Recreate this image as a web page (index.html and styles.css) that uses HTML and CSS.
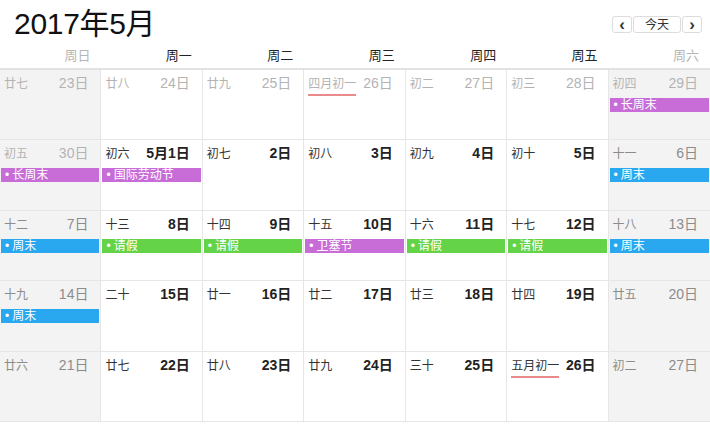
FILE: index.html
```html
<!DOCTYPE html>
<html lang="zh">
<head>
<meta charset="utf-8">
<link rel="stylesheet" href="styles.css">
</head>
<body>
<div class="cal">
  <div class="top">
    <h1 class="title">2017年5月</h1>
    <div class="nav">
      <button class="btn arrow">&lsaquo;</button>
      <button class="btn today">今天</button>
      <button class="btn arrow">&rsaquo;</button>
    </div>
  </div>
  <div class="weekdays">
    <div class="wd we">周日</div>
    <div class="wd">周一</div>
    <div class="wd">周二</div>
    <div class="wd">周三</div>
    <div class="wd">周四</div>
    <div class="wd">周五</div>
    <div class="wd we">周六</div>
  </div>
  <div class="grid">
    <!-- row 1 -->
    <div class="cell weekend other"><div class="head"><span class="lunar">廿七</span><span class="day">23日</span></div></div>
    <div class="cell other"><div class="head"><span class="lunar">廿八</span><span class="day">24日</span></div></div>
    <div class="cell other"><div class="head"><span class="lunar">廿九</span><span class="day">25日</span></div></div>
    <div class="cell other"><div class="head"><span class="lunar mark">四月初一</span><span class="day">26日</span></div></div>
    <div class="cell other"><div class="head"><span class="lunar">初二</span><span class="day">27日</span></div></div>
    <div class="cell other"><div class="head"><span class="lunar">初三</span><span class="day">28日</span></div></div>
    <div class="cell weekend other"><div class="head"><span class="lunar">初四</span><span class="day">29日</span></div><div class="ev purple">长周末</div></div>
    <!-- row 2 -->
    <div class="cell weekend other"><div class="head"><span class="lunar">初五</span><span class="day">30日</span></div><div class="ev purple">长周末</div></div>
    <div class="cell"><div class="head"><span class="lunar">初六</span><span class="day">5月1日</span></div><div class="ev purple">国际劳动节</div></div>
    <div class="cell"><div class="head"><span class="lunar">初七</span><span class="day">2日</span></div></div>
    <div class="cell"><div class="head"><span class="lunar">初八</span><span class="day">3日</span></div></div>
    <div class="cell"><div class="head"><span class="lunar">初九</span><span class="day">4日</span></div></div>
    <div class="cell"><div class="head"><span class="lunar">初十</span><span class="day">5日</span></div></div>
    <div class="cell weekend"><div class="head"><span class="lunar">十一</span><span class="day">6日</span></div><div class="ev blue">周末</div></div>
    <!-- row 3 -->
    <div class="cell weekend"><div class="head"><span class="lunar">十二</span><span class="day">7日</span></div><div class="ev blue">周末</div></div>
    <div class="cell"><div class="head"><span class="lunar">十三</span><span class="day">8日</span></div><div class="ev green">请假</div></div>
    <div class="cell"><div class="head"><span class="lunar">十四</span><span class="day">9日</span></div><div class="ev green">请假</div></div>
    <div class="cell"><div class="head"><span class="lunar">十五</span><span class="day">10日</span></div><div class="ev purple">卫塞节</div></div>
    <div class="cell"><div class="head"><span class="lunar">十六</span><span class="day">11日</span></div><div class="ev green">请假</div></div>
    <div class="cell"><div class="head"><span class="lunar">十七</span><span class="day">12日</span></div><div class="ev green">请假</div></div>
    <div class="cell weekend"><div class="head"><span class="lunar">十八</span><span class="day">13日</span></div><div class="ev blue">周末</div></div>
    <!-- row 4 -->
    <div class="cell weekend"><div class="head"><span class="lunar">十九</span><span class="day">14日</span></div><div class="ev blue">周末</div></div>
    <div class="cell"><div class="head"><span class="lunar">二十</span><span class="day">15日</span></div></div>
    <div class="cell"><div class="head"><span class="lunar">廿一</span><span class="day">16日</span></div></div>
    <div class="cell"><div class="head"><span class="lunar">廿二</span><span class="day">17日</span></div></div>
    <div class="cell"><div class="head"><span class="lunar">廿三</span><span class="day">18日</span></div></div>
    <div class="cell"><div class="head"><span class="lunar">廿四</span><span class="day">19日</span></div></div>
    <div class="cell weekend"><div class="head"><span class="lunar">廿五</span><span class="day">20日</span></div></div>
    <!-- row 5 -->
    <div class="cell weekend"><div class="head"><span class="lunar">廿六</span><span class="day">21日</span></div></div>
    <div class="cell"><div class="head"><span class="lunar">廿七</span><span class="day">22日</span></div></div>
    <div class="cell"><div class="head"><span class="lunar">廿八</span><span class="day">23日</span></div></div>
    <div class="cell"><div class="head"><span class="lunar">廿九</span><span class="day">24日</span></div></div>
    <div class="cell"><div class="head"><span class="lunar">三十</span><span class="day">25日</span></div></div>
    <div class="cell"><div class="head"><span class="lunar mark">五月初一</span><span class="day">26日</span></div></div>
    <div class="cell weekend"><div class="head"><span class="lunar">初二</span><span class="day">27日</span></div></div>
  </div>
</div>
</body>
</html>
```

FILE: styles.css
```css
* { box-sizing: border-box; }
html, body {
  margin: 0;
  padding: 0;
  background: #fff;
  overflow: hidden;
}
body {
  font-family: "Liberation Sans", "Noto Sans CJK SC", sans-serif;
  color: #222;
}
.cal {
  width: 710px;
}
.top {
  height: 43px;
  display: flex;
  justify-content: space-between;
  align-items: flex-start;
  padding: 0 8px 0 14px;
}
.title {
  margin: 0;
  padding-top: 6px;
  font-size: 30px;
  font-weight: normal;
  line-height: 36px;
  color: #111;
  letter-spacing: -0.3px;
}
.nav {
  display: flex;
  margin-top: 16px;
}
.btn {
  height: 17px;
  padding: 0;
  border: 1px solid #dcdcdc;
  background: #fff;
  font-family: "Liberation Sans", "Noto Sans CJK SC", sans-serif;
  font-size: 12px;
  line-height: 14px;
  color: #333;
  border-radius: 3px;
}
.arrow {
  width: 20px;
  font-size: 17px;
  font-weight: bold;
  line-height: 12px;
}
.today {
  width: 48px;
  margin: 0 1px;
}
.weekdays {
  display: grid;
  grid-template-columns: repeat(7, 1fr);
  height: 27px;
  border-bottom: 2px solid #e2e2e2;
}
.wd {
  text-align: right;
  padding-right: 11px;
  font-size: 13px;
  line-height: 24px;
  padding-top: 1px;
  color: #222;
}
.wd.we { color: #b5b5b5; }
.grid {
  display: grid;
  grid-template-columns: repeat(7, 1fr);
  grid-auto-rows: 70.4px;
}
.cell {
  border-right: 1px solid #e6e6e6;
  border-bottom: 1px solid #e6e6e6;
  padding-top: 5px;
  overflow: hidden;
}
.cell:nth-child(7n) { border-right: none; }
.cell.weekend { background: #f3f3f3; }
.head {
  display: flex;
  justify-content: space-between;
  align-items: baseline;
  padding: 0 12px 0 4px;
  height: 17px;
}
.lunar {
  font-size: 12px;
  color: #333;
  line-height: 16px;
}
.day {
  font-size: 14px;
  font-weight: bold;
  color: #222;
  line-height: 16px;
}
.weekend .lunar, .weekend .day { color: #8c8c8c; font-weight: normal; }
.other .lunar { color: #b3b3b3; }
.other .day { color: #b3b3b3; font-weight: normal; }
.mark {
  position: relative;
}
.mark::after {
  content: "";
  position: absolute;
  left: 0;
  right: 0;
  bottom: -4px;
  height: 2px;
  background: #e98b8b;
}
.ev {
  margin: 6px 1px 0 1px;
  height: 14px;
  font-size: 12px;
  line-height: 14px;
  color: #fff;
  padding-left: 4px;
}
.ev::before {
  content: "•";
  margin-right: 3px;
}
.purple { background: #c86dd8; }
.blue { background: #29a8f0; }
.green { background: #65d348; }
```
